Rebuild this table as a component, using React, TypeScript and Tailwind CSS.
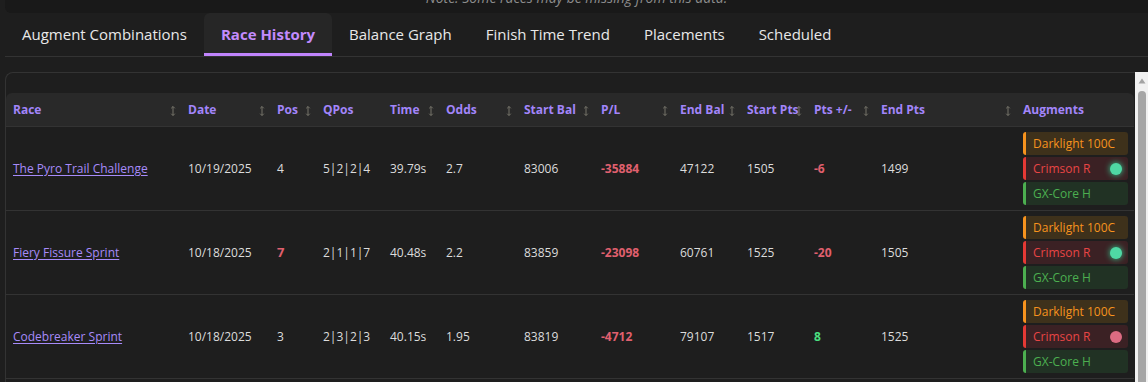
import React from "react";

const COLS =
  "grid grid-cols-[175px_89px_46px_67px_56px_78px_77px_79px_67px_67px_67px_142px_118px]";

const headers: { label: string; sort: boolean }[] = [
  { label: "Race", sort: true },
  { label: "Date", sort: true },
  { label: "Pos", sort: true },
  { label: "QPos", sort: false },
  { label: "Time", sort: true },
  { label: "Odds", sort: true },
  { label: "Start Bal", sort: true },
  { label: "P/L", sort: true },
  { label: "End Bal", sort: true },
  { label: "Start Pts", sort: true },
  { label: "Pts +/-", sort: true },
  { label: "End Pts", sort: true },
  { label: "Augments", sort: false },
];

type Row = {
  race: string;
  date: string;
  pos: string;
  posBad?: boolean;
  qpos: string;
  time: string;
  odds: string;
  startBal: string;
  pl: string;
  endBal: string;
  startPts: string;
  pts: string;
  ptsGood: boolean;
  endPts: string;
  dot: "green" | "pink";
};

const rows: Row[] = [
  {
    race: "The Pyro Trail Challenge",
    date: "10/19/2025",
    pos: "4",
    qpos: "5|2|2|4",
    time: "39.79s",
    odds: "2.7",
    startBal: "83006",
    pl: "-35884",
    endBal: "47122",
    startPts: "1505",
    pts: "-6",
    ptsGood: false,
    endPts: "1499",
    dot: "green",
  },
  {
    race: "Fiery Fissure Sprint",
    date: "10/18/2025",
    pos: "7",
    posBad: true,
    qpos: "2|1|1|7",
    time: "40.48s",
    odds: "2.2",
    startBal: "83859",
    pl: "-23098",
    endBal: "60761",
    startPts: "1525",
    pts: "-20",
    ptsGood: false,
    endPts: "1505",
    dot: "green",
  },
  {
    race: "Codebreaker Sprint",
    date: "10/18/2025",
    pos: "3",
    qpos: "2|3|2|3",
    time: "40.15s",
    odds: "1.95",
    startBal: "83819",
    pl: "-4712",
    endBal: "79107",
    startPts: "1517",
    pts: "8",
    ptsGood: true,
    endPts: "1525",
    dot: "pink",
  },
];

function SortIcon() {
  return (
    <svg width="8" height="12" viewBox="0 0 8 12" className="shrink-0 mt-[3px]">
      <path
        d="M4 1.5V10.5M2.2 3.3L4 1.5L5.8 3.3M2.2 8.7L4 10.5L5.8 8.7"
        fill="none"
        stroke="#76746a"
        strokeWidth="1"
      />
    </svg>
  );
}

const tabs = [
  "Augment Combinations",
  "Race History",
  "Balance Graph",
  "Finish Time Trend",
  "Placements",
  "Scheduled",
];

function Cell({ children, className = "" }: { children: React.ReactNode; className?: string }) {
  return (
    <div className={"flex items-center pl-[7px] whitespace-nowrap " + className}>{children}</div>
  );
}

export default function App() {
  return (
    <div className="w-[1148px] h-[382px] overflow-hidden bg-[#1e1e1e] font-['Open_Sans','Noto_Sans',sans-serif] text-[#dcdcdc]">
      {/* top note strip */}
      <div className="ml-[5px] h-[13px] bg-[#191919] rounded-bl-md overflow-hidden text-center">
        <p className="italic text-[14px] leading-[14px] -mt-[9px] text-[#8c8c8c]">
          Note: Some races may be missing from this data.
        </p>
      </div>

      {/* tabs */}
      <div className="ml-[5px] flex h-[44px] border-b border-[#333]">
        {tabs.map((t) => {
          const active = t === "Race History";
          return (
            <div
              key={t}
              className={
                "flex items-center px-[17px] pt-[2px] border-b-[3px] text-[15px] whitespace-nowrap " +
                (active
                  ? "bg-[#262626] rounded-t-md border-[#c084fc] text-[#c38bfd] font-bold"
                  : "border-transparent text-[#e8e8e8]")
              }
            >
              {t}
            </div>
          );
        })}
      </div>

      {/* card + scrollbar */}
      <div className="mt-[15px] ml-[5px] flex h-[400px]">
        <div className="flex-1 border-t border-l border-[#333] rounded-tl-lg pt-[20px] pr-[1px]">
          {/* header */}
          <div className={COLS + " h-[34px] bg-[#292929] rounded-t-md border-b border-[#333]"}>
            {headers.map((h) => (
              <div key={h.label} className="flex items-center pl-[7px] pr-[4px]">
                <span className="flex-1 min-w-0 whitespace-nowrap text-[12px] font-bold text-[#a285fa]">
                  {h.label}
                </span>
                {h.sort && <SortIcon />}
              </div>
            ))}
          </div>

          {/* rows */}
          {rows.map((r) => (
            <div key={r.race} className={COLS + " h-[84px] border-b border-[#333] text-[12px]"}>
              <Cell>
                <span className="text-[#a78bfa] underline underline-offset-2">{r.race}</span>
              </Cell>
              <Cell>{r.date}</Cell>
              <Cell>
                {r.posBad ? (
                  <span className="font-bold text-[#e0606e] text-[13px]">{r.pos}</span>
                ) : (
                  r.pos
                )}
              </Cell>
              <Cell>{r.qpos}</Cell>
              <Cell>{r.time}</Cell>
              <Cell>{r.odds}</Cell>
              <Cell>{r.startBal}</Cell>
              <Cell>
                <span className="font-bold text-[#e0606e]">{r.pl}</span>
              </Cell>
              <Cell>{r.endBal}</Cell>
              <Cell>{r.startPts}</Cell>
              <Cell>
                <span className={"font-bold " + (r.ptsGood ? "text-[#4ade80]" : "text-[#e0606e]")}>
                  {r.pts}
                </span>
              </Cell>
              <Cell>{r.endPts}</Cell>
              <div className="flex flex-col gap-[2px] pt-[5px] pl-[7px] pr-[6px]">
                <div className="h-[23px] flex items-center rounded-[3px] border-l-[3px] border-[#f7931e] bg-[#3e311b] pl-[7px] text-[12px] font-medium text-[#f7931e]">
                  Darklight 100C
                </div>
                <div className="h-[23px] flex items-center justify-between rounded-[3px] border-l-[3px] border-[#e53935] bg-[#3b2124] pl-[7px] pr-[6px] text-[12px] font-medium text-[#e84545]">
                  <span>Crimson R</span>
                  {r.dot === "green" ? (
                    <span className="w-3 h-3 rounded-full bg-[#4fd8a4] shadow-[0_0_6px_#34d399]" />
                  ) : (
                    <span className="w-3 h-3 rounded-full bg-[#dc6b82]" />
                  )}
                </div>
                <div className="h-[23px] flex items-center rounded-[3px] border-l-[3px] border-[#4caf50] bg-[#213224] pl-[7px] text-[12px] font-medium text-[#4caf50]">
                  GX-Core H
                </div>
              </div>
            </div>
          ))}
        </div>

        {/* scrollbar */}
        <div className="w-[14px] bg-[#f1f1f1] flex flex-col items-center">
          <svg width="8" height="6" viewBox="0 0 8 6" className="mt-[6px]">
            <path d="M4 0.5L7.5 5.5H0.5Z" fill="#a3a3a3" />
          </svg>
          <div className="mt-[7px] w-[8px] flex-1 rounded-t-full bg-[#a6a6a6]" />
        </div>
      </div>
    </div>
  );
}
